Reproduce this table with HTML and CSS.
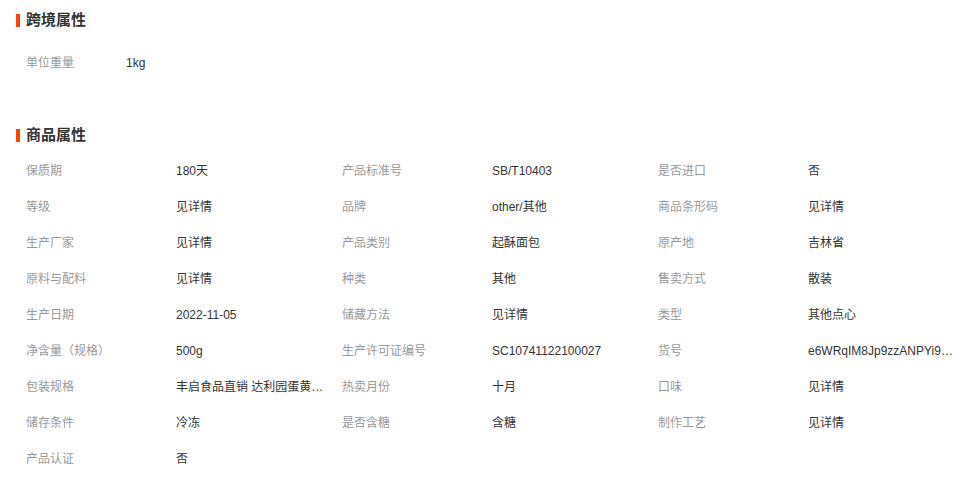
FILE: index.html
```html
<!DOCTYPE html>
<html lang="zh-CN">
<head>
    <meta charset="UTF-8">
    <meta name="viewport" content="width=device-width, initial-scale=1.0">
    <title>商品属性</title>
    <link rel="stylesheet" href="styles.css">
</head>
<body>
    <div class="page">
        <div class="section section-cross">
            <div class="section-title">跨境属性</div>
            <div class="attr-list single">
                <div class="attr">
                    <span class="attr-name">单位重量</span>
                    <span class="attr-value">1kg</span>
                </div>
            </div>
        </div>

        <div class="section">
            <div class="section-title">商品属性</div>
            <div class="attr-list">
                <div class="attr"><span class="attr-name">保质期</span><span class="attr-value">180天</span></div>
                <div class="attr"><span class="attr-name">产品标准号</span><span class="attr-value">SB/T10403</span></div>
                <div class="attr"><span class="attr-name">是否进口</span><span class="attr-value">否</span></div>

                <div class="attr"><span class="attr-name">等级</span><span class="attr-value">见详情</span></div>
                <div class="attr"><span class="attr-name">品牌</span><span class="attr-value">other/其他</span></div>
                <div class="attr"><span class="attr-name">商品条形码</span><span class="attr-value">见详情</span></div>

                <div class="attr"><span class="attr-name">生产厂家</span><span class="attr-value">见详情</span></div>
                <div class="attr"><span class="attr-name">产品类别</span><span class="attr-value">起酥面包</span></div>
                <div class="attr"><span class="attr-name">原产地</span><span class="attr-value">吉林省</span></div>

                <div class="attr"><span class="attr-name">原料与配料</span><span class="attr-value">见详情</span></div>
                <div class="attr"><span class="attr-name">种类</span><span class="attr-value">其他</span></div>
                <div class="attr"><span class="attr-name">售卖方式</span><span class="attr-value">散装</span></div>

                <div class="attr"><span class="attr-name">生产日期</span><span class="attr-value">2022-11-05</span></div>
                <div class="attr"><span class="attr-name">储藏方法</span><span class="attr-value">见详情</span></div>
                <div class="attr"><span class="attr-name">类型</span><span class="attr-value">其他点心</span></div>

                <div class="attr"><span class="attr-name">净含量（规格）</span><span class="attr-value">500g</span></div>
                <div class="attr"><span class="attr-name">生产许可证编号</span><span class="attr-value">SC10741122100027</span></div>
                <div class="attr"><span class="attr-name">货号</span><span class="attr-value">e6WRqIM8Jp9zzANPYi9pXk2Lw</span></div>

                <div class="attr"><span class="attr-name">包装规格</span><span class="attr-value">丰启食品直销 达利园蛋黄派整箱</span></div>
                <div class="attr"><span class="attr-name">热卖月份</span><span class="attr-value">十月</span></div>
                <div class="attr"><span class="attr-name">口味</span><span class="attr-value">见详情</span></div>

                <div class="attr"><span class="attr-name">储存条件</span><span class="attr-value">冷冻</span></div>
                <div class="attr"><span class="attr-name">是否含糖</span><span class="attr-value">含糖</span></div>
                <div class="attr"><span class="attr-name">制作工艺</span><span class="attr-value">见详情</span></div>

                <div class="attr"><span class="attr-name">产品认证</span><span class="attr-value">否</span></div>
            </div>
        </div>
    </div>
</body>
</html>
```

FILE: styles.css
```css
*{
    margin: 0;
    padding: 0;
    box-sizing: border-box;
}
body {
    background: #fff;
    font-family: "Liberation Sans", "Noto Sans CJK SC", sans-serif;
    font-size: 12px;
    color: #333;
}
.page {
    padding: 5px 0 0 16px;
}
.section-cross {
    margin-bottom: 39px;
}
.section-title {
    height: 30px;
    line-height: 30px;
    font-size: 15px;
    font-weight: bold;
    color: #333;
    display: flex;
    align-items: center;
    margin-bottom: 3px;
}
.section-cross .section-title {
    margin-bottom: 10px;
}
.section-title::before {
    content: "";
    width: 4px;
    height: 13px;
    background: #ff4400;
    margin-right: 6px;
}
.attr-list {
    display: grid;
    grid-template-columns: repeat(3, 316px);
    padding-left: 10px;
}
.attr {
    display: flex;
    height: 36px;
    line-height: 36px;
}
.attr-name {
    width: 150px;
    color: #999;
    flex-shrink: 0;
}
.single .attr-name {
    width: 100px;
}
.attr-value {
    width: 150px;
    color: #333;
    white-space: nowrap;
    overflow: hidden;
    text-overflow: ellipsis;
}
```
